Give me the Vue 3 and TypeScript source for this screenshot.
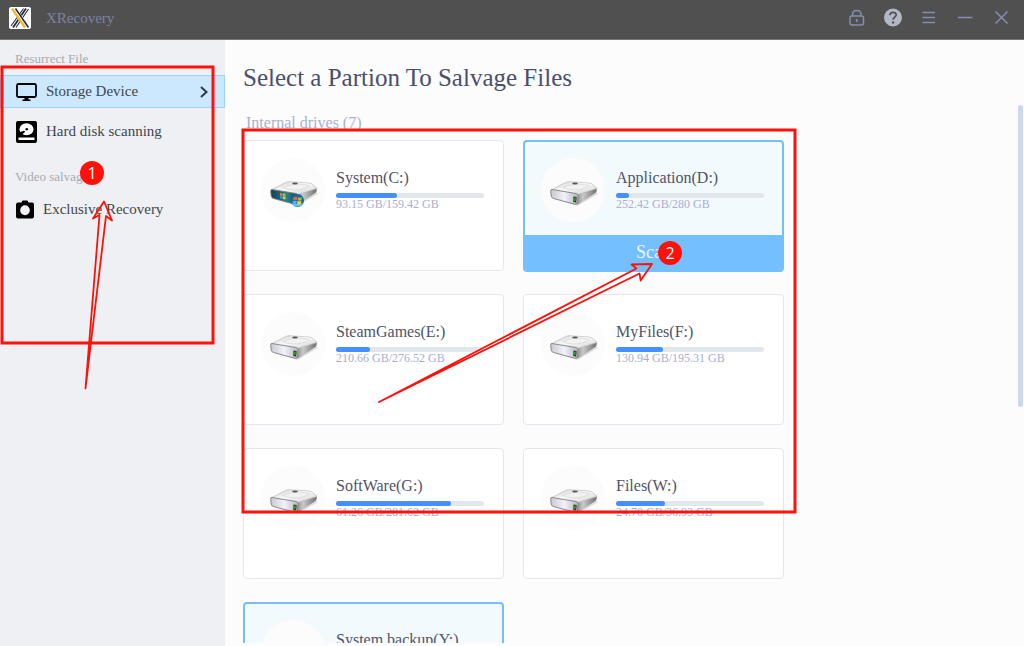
<script setup lang="ts">
interface Drive {
  name: string
  usage: string
  fill: number
  active?: boolean
  scan?: boolean
  system?: boolean
}

const drives: Drive[] = [
  { name: 'System(C:)', usage: '93.15 GB/159.42 GB', fill: 41, system: true },
  { name: 'Application(D:)', usage: '252.42 GB/280 GB', fill: 8.5, active: true, scan: true },
  { name: 'SteamGames(E:)', usage: '210.66 GB/276.52 GB', fill: 22.7 },
  { name: 'MyFiles(F:)', usage: '130.94 GB/195.31 GB', fill: 32 },
  { name: 'SoftWare(G:)', usage: '61.26 GB/281.62 GB', fill: 77.5 },
  { name: 'Files(W:)', usage: '24.70 GB/36.93 GB', fill: 33 },
  { name: 'System backup(Y:)', usage: '', fill: 0, active: true },
]
</script>

<template>
  <div class="app">
    <header class="titlebar">
      <svg class="logo" viewBox="0 0 22 22" aria-hidden="true">
        <rect width="22" height="22" rx="2" fill="#fff" />
        <g fill="none" stroke="#222a3a">
          <path d="M17 1.500 4 20.500" stroke-width="1.800" />
          <path d="M19.500 2 7 20.500M14.500 1.500 2 19" stroke-width="1.100" />
        </g>
        <path d="M4.500 1.500 18 20.500" stroke="#fff" stroke-width="5" />
        <path d="M3 1.500 16 20.500" stroke="#f2b632" stroke-width="2.400" />
        <path d="M6.500 1.500 19.500 20.500" stroke="#222a3a" stroke-width="1.500" />
      </svg>
      <span class="brand">XRecovery</span>
      <div class="tools">
        <button type="button" aria-label="Lock">
          <svg viewBox="0 0 20 20" fill="none" stroke="#858db0" stroke-width="1.500">
            <rect x="3" y="8" width="13.500" height="9" rx="2" />
            <path d="M5.500 8V6.500C5.500 1 14 1 14 6.500V8" />
            <path d="M9.800 11v3" stroke-width="1.800" />
          </svg>
        </button>
        <button type="button" aria-label="Help">
          <svg viewBox="0 0 20 20" fill="none">
            <circle cx="10" cy="9.500" r="9" fill="#b4b7c6" />
            <path d="M6.900 7.300C7 3.300 13.200 3.500 13.200 7c0 2-3.100 2.200-3.100 4.700" stroke="#505050" stroke-width="1.700" />
            <circle cx="10.100" cy="14.500" r="1.200" fill="#505050" />
          </svg>
        </button>
        <button type="button" aria-label="Menu">
          <svg viewBox="0 0 20 20" stroke="#858db0" stroke-width="1.500">
            <path d="M3.500 4.500h12.500M3.500 9.500h12.500M3.500 14.500h12.500" />
          </svg>
        </button>
        <button type="button" aria-label="Minimize">
          <svg viewBox="0 0 20 20" stroke="#858db0" stroke-width="1.500">
            <path d="M3 9.500h14.500" />
          </svg>
        </button>
        <button type="button" aria-label="Close">
          <svg viewBox="0 0 20 20" stroke="#858db0" stroke-width="1.500">
            <path d="M4.500 3.500l12 12M16.500 3.500l-12 12" />
          </svg>
        </button>
      </div>
    </header>

    <div class="body">
      <nav class="sidebar">
        <h2>Resurrect File</h2>
        <a href="#storage" class="item current">
          <svg class="wide" viewBox="0 0 21 20">
            <rect x="1" y="2" width="19" height="13" rx="1.500" fill="none" stroke="#000" stroke-width="1.800" />
            <path d="M8.500 15h4v2.500h2V19h-8v-1.500h2z" />
          </svg>
          <span>Storage Device</span>
          <svg class="chevron" viewBox="0 0 10 12" fill="none" stroke="#2d3a46" stroke-width="2">
            <path d="M2 1l5.500 5L2 11" />
          </svg>
        </a>
        <a href="#disk" class="item">
          <svg class="wide" viewBox="0 0 21 22">
            <rect width="21" height="22" rx="2" />
            <ellipse cx="10.500" cy="8.300" rx="7" ry="6" fill="#fff" />
            <circle cx="10.800" cy="8.300" r="1.300" />
            <path d="M2.500 11.500 8 9.800l1.200 1-4.200 3.700z" />
            <rect x="2.500" y="16.500" width="16" height="2.500" fill="#fff" />
          </svg>
          <span>Hard disk scanning</span>
        </a>
        <h2 class="next">Video salvage</h2>
        <a href="#video" class="item">
          <svg class="narrow" viewBox="0 0 18 19">
            <path d="M5.500 2.500 6.500.5h5l1 2H16a2 2 0 0 1 2 2V16.500a2 2 0 0 1-2 2H2a2 2 0 0 1-2-2v-12a2 2 0 0 1 2-2z" />
            <ellipse cx="9" cy="10.200" rx="4.800" ry="5" fill="#f2f3f7" />
          </svg>
          <span>Exclusive Recovery</span>
        </a>
      </nav>

      <main class="main">
        <h1>Select a Partion To Salvage Files</h1>
        <div class="scroller">
          <div class="list">
            <h3>Internal drives (7)</h3>
            <div class="grid">
              <article v-for="d in drives" :key="d.name" class="card" :class="{ active: d.active }">
                <div class="info">
                  <svg class="drive" viewBox="0 0 64 64" aria-hidden="true">
                    <defs>
                      <linearGradient id="lid" x1="0" y1="0" x2="1" y2="1">
                        <stop offset="0" stop-color="#c9c9c9" />
                        <stop offset=".45" stop-color="#fafafa" />
                        <stop offset="1" stop-color="#d0d0d0" />
                      </linearGradient>
                      <linearGradient id="side" x1="0" y1="0" x2="1" y2="0">
                        <stop offset="0" stop-color="#777" />
                        <stop offset=".4" stop-color="#c8c8c8" />
                        <stop offset="1" stop-color="#707070" />
                      </linearGradient>
                      <linearGradient id="face" x1="0" y1="0" x2="1" y2="0">
                        <stop offset="0" stop-color="#c8c9d1" />
                        <stop offset=".5" stop-color="#f2f2fa" />
                        <stop offset="1" stop-color="#b5b5bd" />
                      </linearGradient>
                      <linearGradient id="teal" x1="0" y1="0" x2="1" y2="0">
                        <stop offset="0" stop-color="#163f58" />
                        <stop offset=".6" stop-color="#23838c" />
                        <stop offset="1" stop-color="#173d52" />
                      </linearGradient>
                    </defs>
                    <circle cx="32" cy="32" r="32" fill="#fcfcfc" />
                    <path d="M10 39 36 48 57 36 52 33 30 40z" fill="#cfcfcf" opacity=".7" />
                    <path d="M34 36 55 29.500Q56.500 31 55 34.500L37 46.500 33 46z" fill="url(#side)" />
                    <path d="M10 32 24.500 24.500Q26 23.500 29 23.700L48 25Q51 25.300 52.500 27L56 30.500 37 36.500z" fill="url(#lid)" stroke="#b5b5b5" stroke-width=".6" />
                    <path d="M22 29.500Q34 24 48 27.500 43 32.500 31 31.800 24 31.500 22 29.500z" fill="#f2f2f2" stroke="#cacaca" stroke-width=".5" />
                    <ellipse cx="34" cy="25.500" rx="2.800" ry="1" fill="#555" />
                    <path d="M11 31.500 35 35.500Q37.500 36 37.200 38.500L36.500 44Q36 46.700 33.500 46.200L12.500 40.500Q10.500 40 10.200 38L9.700 33.500Q9.500 31.300 11 31.500z" :fill="d.system ? 'url(#teal)' : 'url(#face)'" stroke="#808080" stroke-width=".9" />
                    <path v-if="!d.system" d="M32.500 38.500l3.200.4-.6 5.600-2.800-.5z" fill="#173a17" />
                    <path v-if="!d.system" d="M33.500 39.500l1.300.2-.5 3.500-1.200-.2z" fill="#45b52b" />
                    <g v-if="d.system">
                      <path d="M19 35l2.500.2v3L19 37.500z" fill="#ef7a35" />
                      <path d="M22 35.300l2.500.4v3L22 38.300z" fill="#9cc53b" />
                      <path d="M19.200 38l2.300.5v2.500l-2.300-.7z" fill="#3f9be8" />
                      <path d="M22 38.600l2.500.5v2.400l-2.500-.6z" fill="#f8ca3c" />
                      <circle cx="36.500" cy="42.500" r="6.500" fill="#1765b3" />
                      <path d="M31 45a6 6 0 0 0 11 0q-5 2-11 0z" fill="#5cc4f3" />
                      <path d="M32.500 39.500q2-1.200 3.700-.3l-.4 3q-2-.8-3.800.3z" fill="#f06a2c" />
                      <path d="M37 39.300q2 .8 3.800-.2l-.4 3.200q-2 .8-3.800 0z" fill="#95ca35" />
                      <path d="M31.900 43.200q2-1 3.800-.2l-.4 3q-1.900-.8-3.800.2z" fill="#58b1f2" />
                      <path d="M36.500 43.100q2 .8 3.800 0l-.4 3q-2 .8-3.800-.1z" fill="#fcd638" />
                    </g>
                  </svg>
                  <div class="details">
                    <h4>{{ d.name }}</h4>
                    <div class="track"><div class="fill" :style="{ width: d.fill + '%' }"></div></div>
                    <p>{{ d.usage }}</p>
                  </div>
                </div>
                <button v-if="d.scan" type="button" class="scan">Scan</button>
              </article>
            </div>
          </div>
          <div class="thumb"></div>
        </div>
      </main>
    </div>

    <svg class="marks" fill="none" stroke="#ff1008" aria-hidden="true">
      <rect x="2" y="67" width="211" height="276" stroke-width="3" />
      <rect x="243" y="130" width="552" height="382" stroke-width="3" />
      <g stroke-width="1.800" stroke-linejoin="round">
        <path d="M85.500 388.500 99.500 215 93 218.500 104 201.500 112 220.500 106 216z" />
        <path d="M379 402 636.500 268.500 631.500 264.500 652 264 640.700 280.500 639.500 273.500z" />
      </g>
    </svg>
    <span class="badge first">1</span>
    <span class="badge second">2</span>
  </div>
</template>

<style>
body {
  margin: 0;
}
</style>

<style scoped>
* {
  box-sizing: border-box;
}
.app {
  position: relative;
  display: flex;
  flex-direction: column;
  height: 100vh;
  overflow: hidden;
  background: #fcfcfc;
  font-family: "Liberation Serif", "Times New Roman", serif;
}
h1, h2, h3, h4, p {
  margin: 0;
  font-weight: 400;
}
button {
  padding: 0;
  border: 0;
  background: none;
  font-family: inherit;
}
.titlebar {
  display: flex;
  align-items: center;
  flex: none;
  height: 40px;
  padding: 0 13px 4px 9px;
  background: #505050;
  border-bottom: 1px solid #777;
}
.logo {
  width: 22px;
  height: 22px;
}
.brand {
  margin-left: 15px;
  font-size: 15px;
  line-height: 20px;
  color: #7b82a8;
}
.tools {
  display: flex;
  gap: 16px;
  margin-left: auto;
}
.tools button,
.tools svg {
  display: block;
  width: 20px;
  height: 20px;
}
.body {
  display: flex;
  flex: 1;
  min-height: 0;
}
.sidebar {
  flex: none;
  width: 225px;
  padding-top: 8px;
  background: #eff0f4;
}
.sidebar h2 {
  margin-bottom: 5px;
  padding-left: 15px;
  font-size: 13px;
  line-height: 22px;
  color: #a9abb1;
}
.sidebar h2.next {
  margin-top: 18px;
}
.item {
  display: flex;
  align-items: center;
  gap: 9px;
  height: 33px;
  margin-bottom: 7px;
  padding: 0 15px;
  border: 1px solid transparent;
  font-size: 15px;
  color: #41464d;
  text-decoration: none;
}
.item.current {
  background: #cce8ff;
  border-color: #99d1ff;
}
.wide {
  width: 21px;
  height: 22px;
}
.narrow {
  width: 18px;
  height: 19px;
}
.chevron {
  width: 10px;
  height: 12px;
  margin-left: auto;
}
.main {
  display: flex;
  flex-direction: column;
  flex: 1;
  min-width: 0;
  padding: 22px 1px 3px 18px;
}
h1 {
  font-size: 25px;
  line-height: 32px;
  color: #4a506c;
}
.scroller {
  display: flex;
  flex: 1;
  min-height: 0;
  margin-top: 11px;
}
.list {
  flex: 1;
  overflow: hidden;
  padding-top: 8px;
}
h3 {
  margin-bottom: 7px;
  padding-left: 3px;
  font-size: 16px;
  line-height: 20px;
  color: #aab0d2;
}
.grid {
  display: grid;
  grid-template-columns: repeat(auto-fill, 261px);
  grid-auto-rows: 131px;
  gap: 23px 19px;
}
.card {
  display: flex;
  flex-direction: column;
  overflow: hidden;
  padding: 17px 17px 0;
  background: #fff;
  border: 1px solid #e4e6f2;
  border-radius: 4px;
}
.card.active {
  margin-bottom: -1px;
  padding: 16px 16px 0;
  background: #f3fafe;
  border: 2px solid #73bfff;
}
.info {
  display: flex;
  gap: 11px;
}
.drive {
  flex: none;
  width: 64px;
  height: 64px;
}
.details {
  flex: 0 0 148px;
  padding-top: 10px;
}
h4 {
  font-size: 16px;
  line-height: 20px;
  white-space: nowrap;
  color: #4f5468;
}
.track {
  height: 5px;
  margin-top: 5px;
  border-radius: 3px;
  background: #e2e7ed;
}
.fill {
  height: 100%;
  border-radius: 3px;
  background: #4590fe;
}
.details p {
  font-size: 12px;
  line-height: 12px;
  color: #a8aed0;
}
.scan {
  flex: none;
  height: 35px;
  margin: auto -16px 0;
  background: #73bfff;
  font-size: 18px;
  color: #e9f5ff;
}
.thumb {
  flex: none;
  width: 5px;
  height: 302px;
  border-radius: 3px;
  background: #cfd7ed;
}
.marks {
  position: absolute;
  inset: 0;
  width: 100%;
  height: 100%;
  pointer-events: none;
}
.badge {
  position: absolute;
  width: 24px;
  height: 24px;
  border-radius: 50%;
  background: #ff1008;
  color: #fff;
  font: 16px/24px "Open Sans", "Noto Sans", sans-serif;
  text-align: center;
}
.badge.first {
  left: 80px;
  top: 161px;
}
.badge.second {
  left: 658px;
  top: 241px;
}
</style>
